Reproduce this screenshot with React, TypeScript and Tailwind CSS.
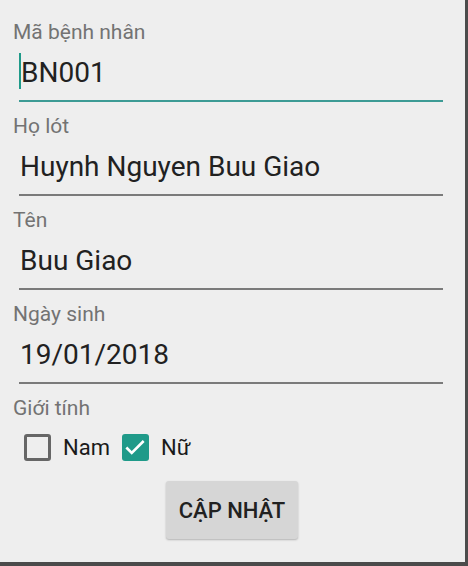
import React from "react";

const font = { fontFamily: "Roboto, 'Noto Sans', sans-serif" };

interface FieldProps {
  label: string;
  value: string;
  focused?: boolean;
}

function Field({ label, value, focused }: FieldProps) {
  return (
    <div className="mb-[13px]">
      <div className="h-[22px] text-[21px] leading-[22px] text-[#737373]">{label}</div>
      <div
        className={
          "ml-[6px] w-[424px] h-[59px] flex items-center " +
          (focused ? "border-b-2 border-[#3d9b95]" : "border-b-2 border-[#7a7a7a]")
        }
      >
        {focused && <span className="w-[2px] h-[36px] bg-[#1f9a89] -mr-[1px] mb-[1px]" />}
        <span className="text-[28px] leading-[32px] text-[#212121] pl-[1px] pt-[2px]">{value}</span>
      </div>
    </div>
  );
}

export default function App() {
  return (
    <div className="w-[468px] h-[566px] bg-[#4b4b4b]" style={font}>
      <div className="w-[465px] h-[562px] bg-[#eeeeee] pt-[21px] pl-[13px]">
        <Field label="Mã bệnh nhân" value="BN001" focused />
        <Field label="Họ lót" value="Huynh Nguyen Buu Giao" />
        <Field label="Tên" value="Buu Giao" />
        <Field label="Ngày sinh" value="19/01/2018" />
        <div className="h-[22px] text-[21px] leading-[22px] text-[#737373]">Giới tính</div>
        <div className="flex items-center h-[56px] pl-[11px]">
          <span className="w-[27px] h-[27px] rounded-[3px] border-[3px] border-[#666666]" />
          <span className="ml-[12px] text-[22px] text-[#1a1a1a]">Nam</span>
          <span className="ml-[12px] w-[27px] h-[27px] rounded-[3px] bg-[#1f9a89] flex items-center justify-center">
            <svg width="26" height="26" viewBox="0 0 24 24" fill="none">
              <path d="M4 12.5l5 5L20 6.5" stroke="#ffffff" strokeWidth="2.4" />
            </svg>
          </span>
          <span className="ml-[12px] text-[22px] text-[#1a1a1a]">Nữ</span>
        </div>
        <div className="flex pl-[153px] pt-[6px]">
          <button className="w-[132px] h-[58px] rounded-[3px] bg-[#d6d6d6] shadow-[0_1px_2px_rgba(0,0,0,0.25)] text-[22px] font-medium text-[#212121]">
            CẬP NHẬT
          </button>
        </div>
      </div>
    </div>
  );
}
